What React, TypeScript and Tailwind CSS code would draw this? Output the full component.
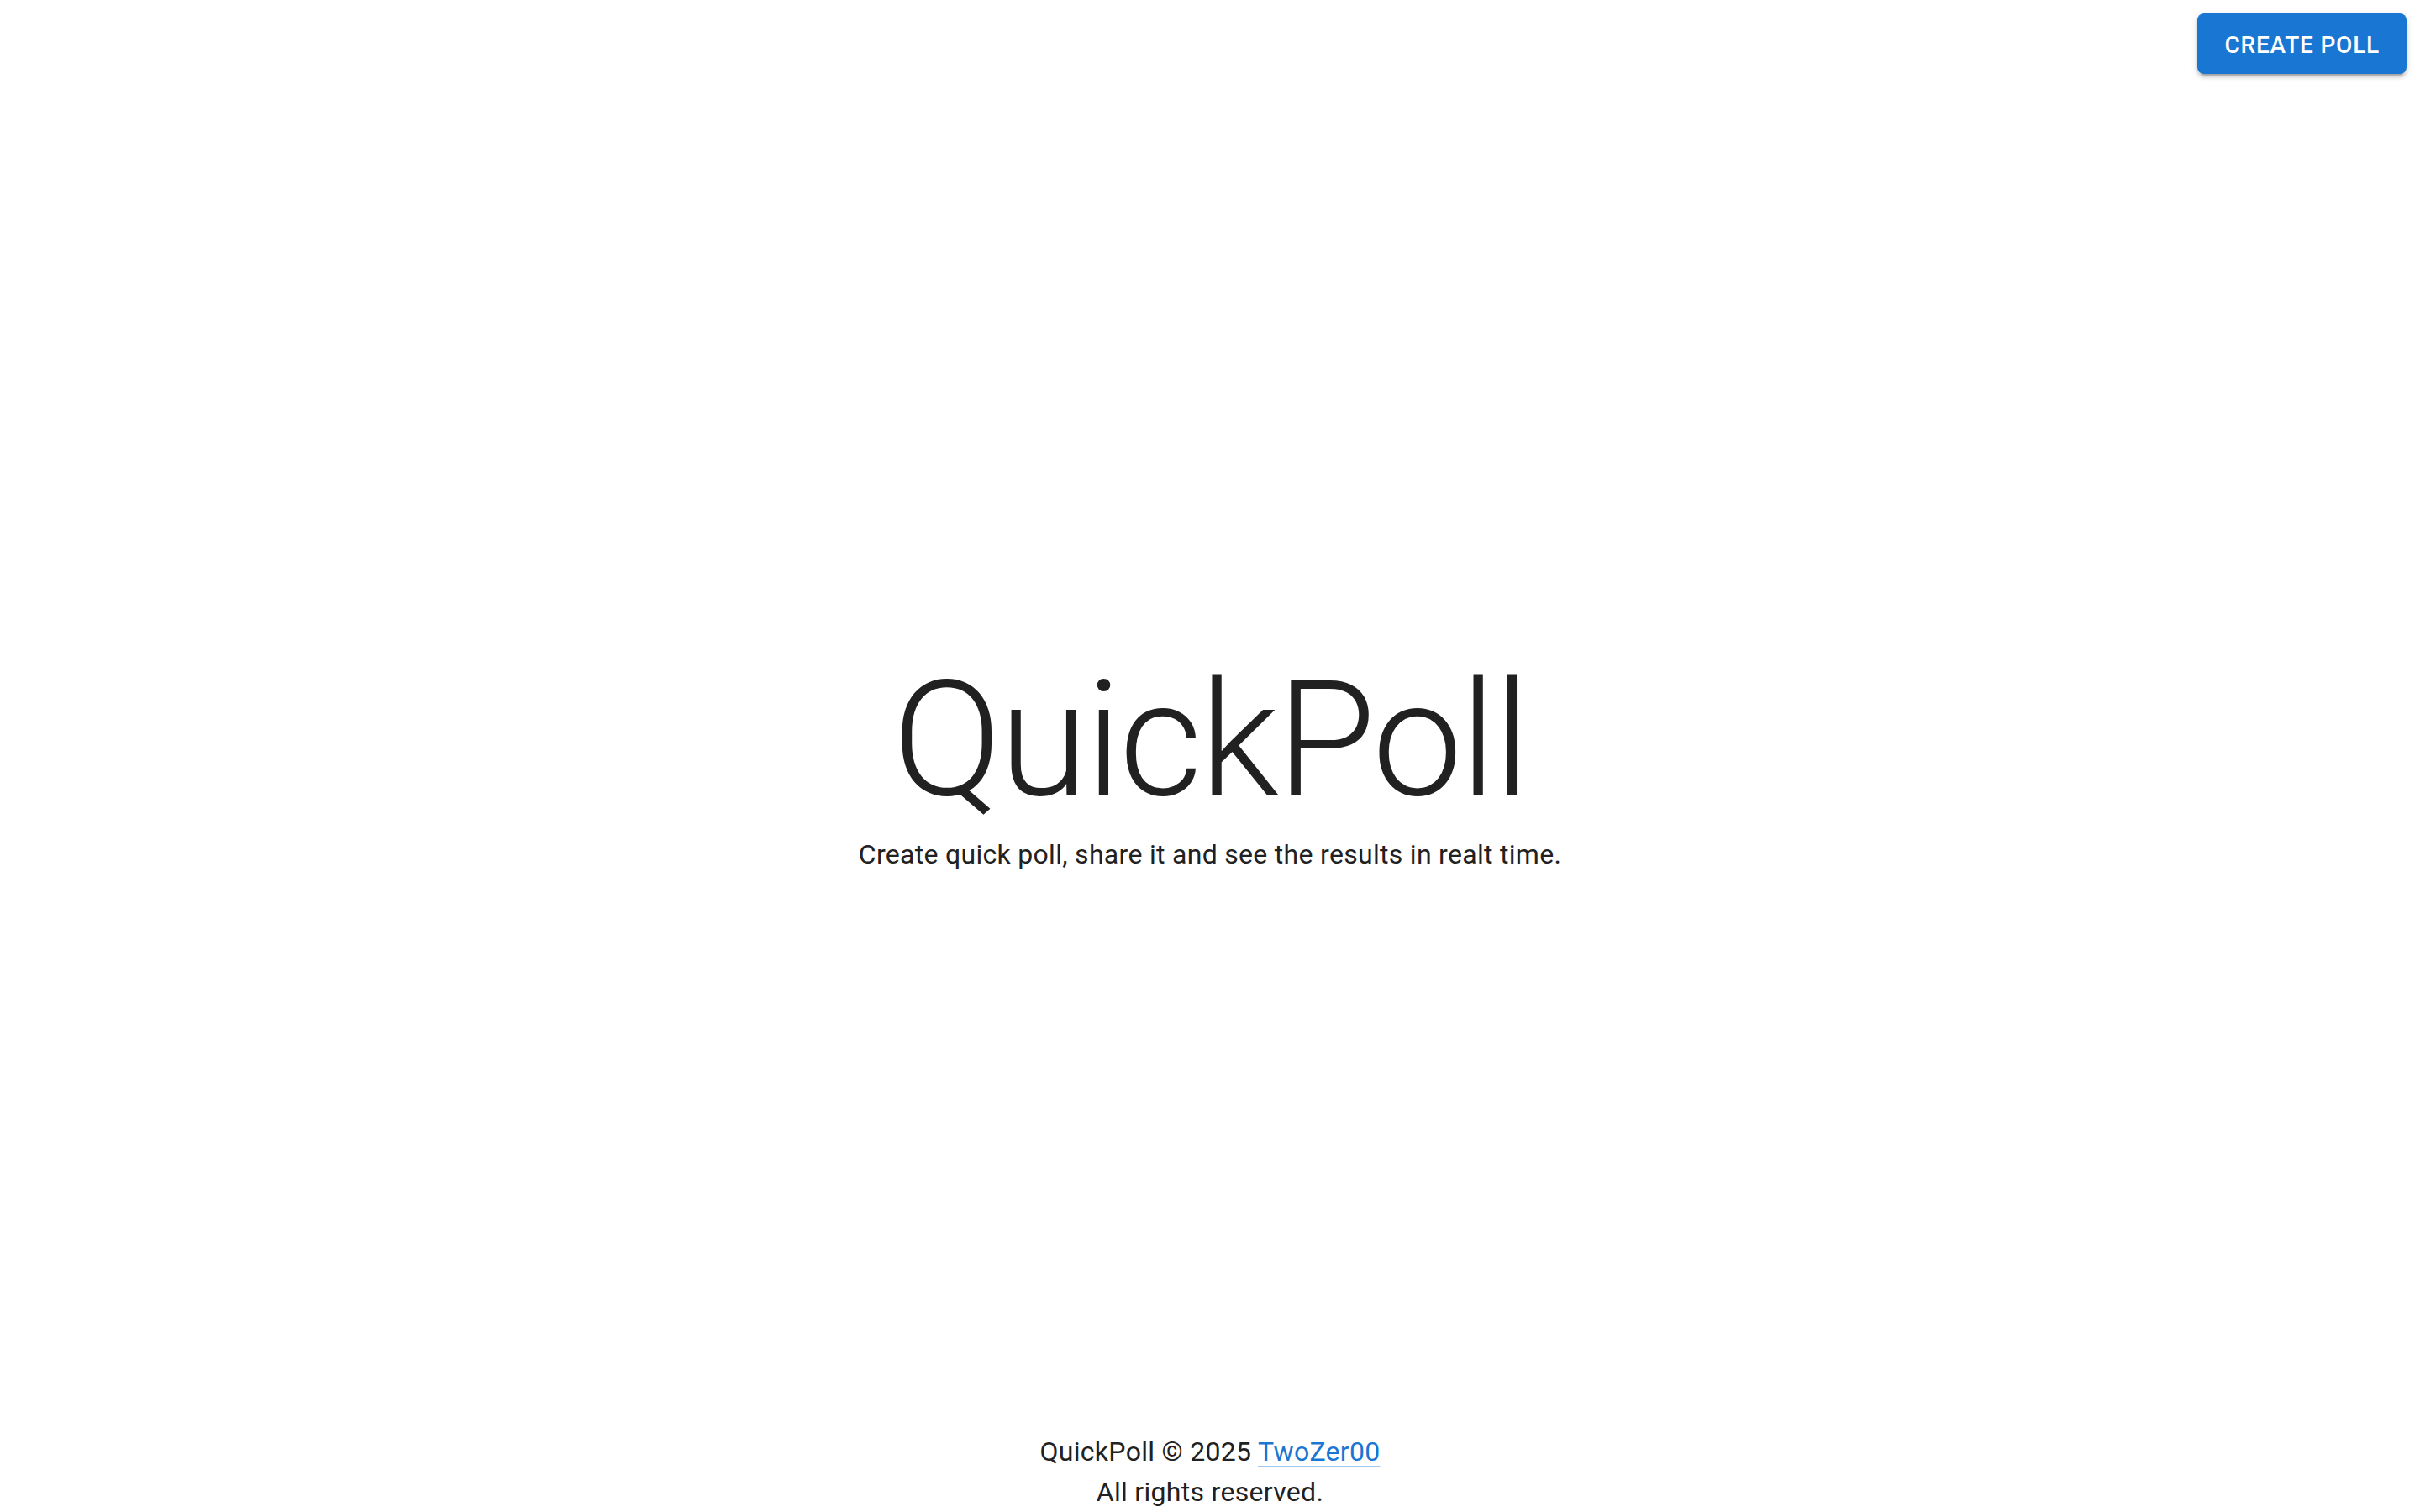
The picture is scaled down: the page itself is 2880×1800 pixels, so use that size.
import React from "react";

export default function App() {
  return (
    <div
      className="flex h-screen w-full flex-col bg-white text-[#212121]"
      style={{ fontFamily: "Roboto, 'Liberation Sans', sans-serif" }}
    >
      <header className="flex h-[106px] shrink-0 items-start justify-end pr-4 pt-4">
        <button className="h-[72px] rounded-[8px] bg-[#1976d2] px-8 pb-[10px] pt-[14px] text-[28px] font-medium uppercase leading-[48px] tracking-[0.8px] text-white shadow-[0px_6px_2px_-4px_rgba(0,0,0,0.2),0px_4px_4px_0px_rgba(0,0,0,0.14),0px_2px_10px_0px_rgba(0,0,0,0.12)]">
          Create Poll
        </button>
      </header>
      <main className="flex flex-1 flex-col items-center justify-center">
        <h1 className="text-[192px] font-light leading-[224px] tracking-[-3px] text-[#212121]">
          QuickPoll
        </h1>
        <p className="text-[32px] leading-[48px] tracking-[0.3px] text-[#212121]">
          Create quick poll, share it and see the results in realt time.
        </p>
      </main>
      <footer className="flex shrink-0 flex-col items-center text-[32px] leading-[48px] tracking-[0.3px] text-[#212121]">
        <p>
          QuickPoll © 2025{" "}
          <a
            href="#"
            className="text-[#1976d2] underline decoration-[rgba(25,118,210,0.4)] decoration-2 underline-offset-[6px]"
          >
            TwoZer00
          </a>
        </p>
        <p>All rights reserved.</p>
      </footer>
    </div>
  );
}
